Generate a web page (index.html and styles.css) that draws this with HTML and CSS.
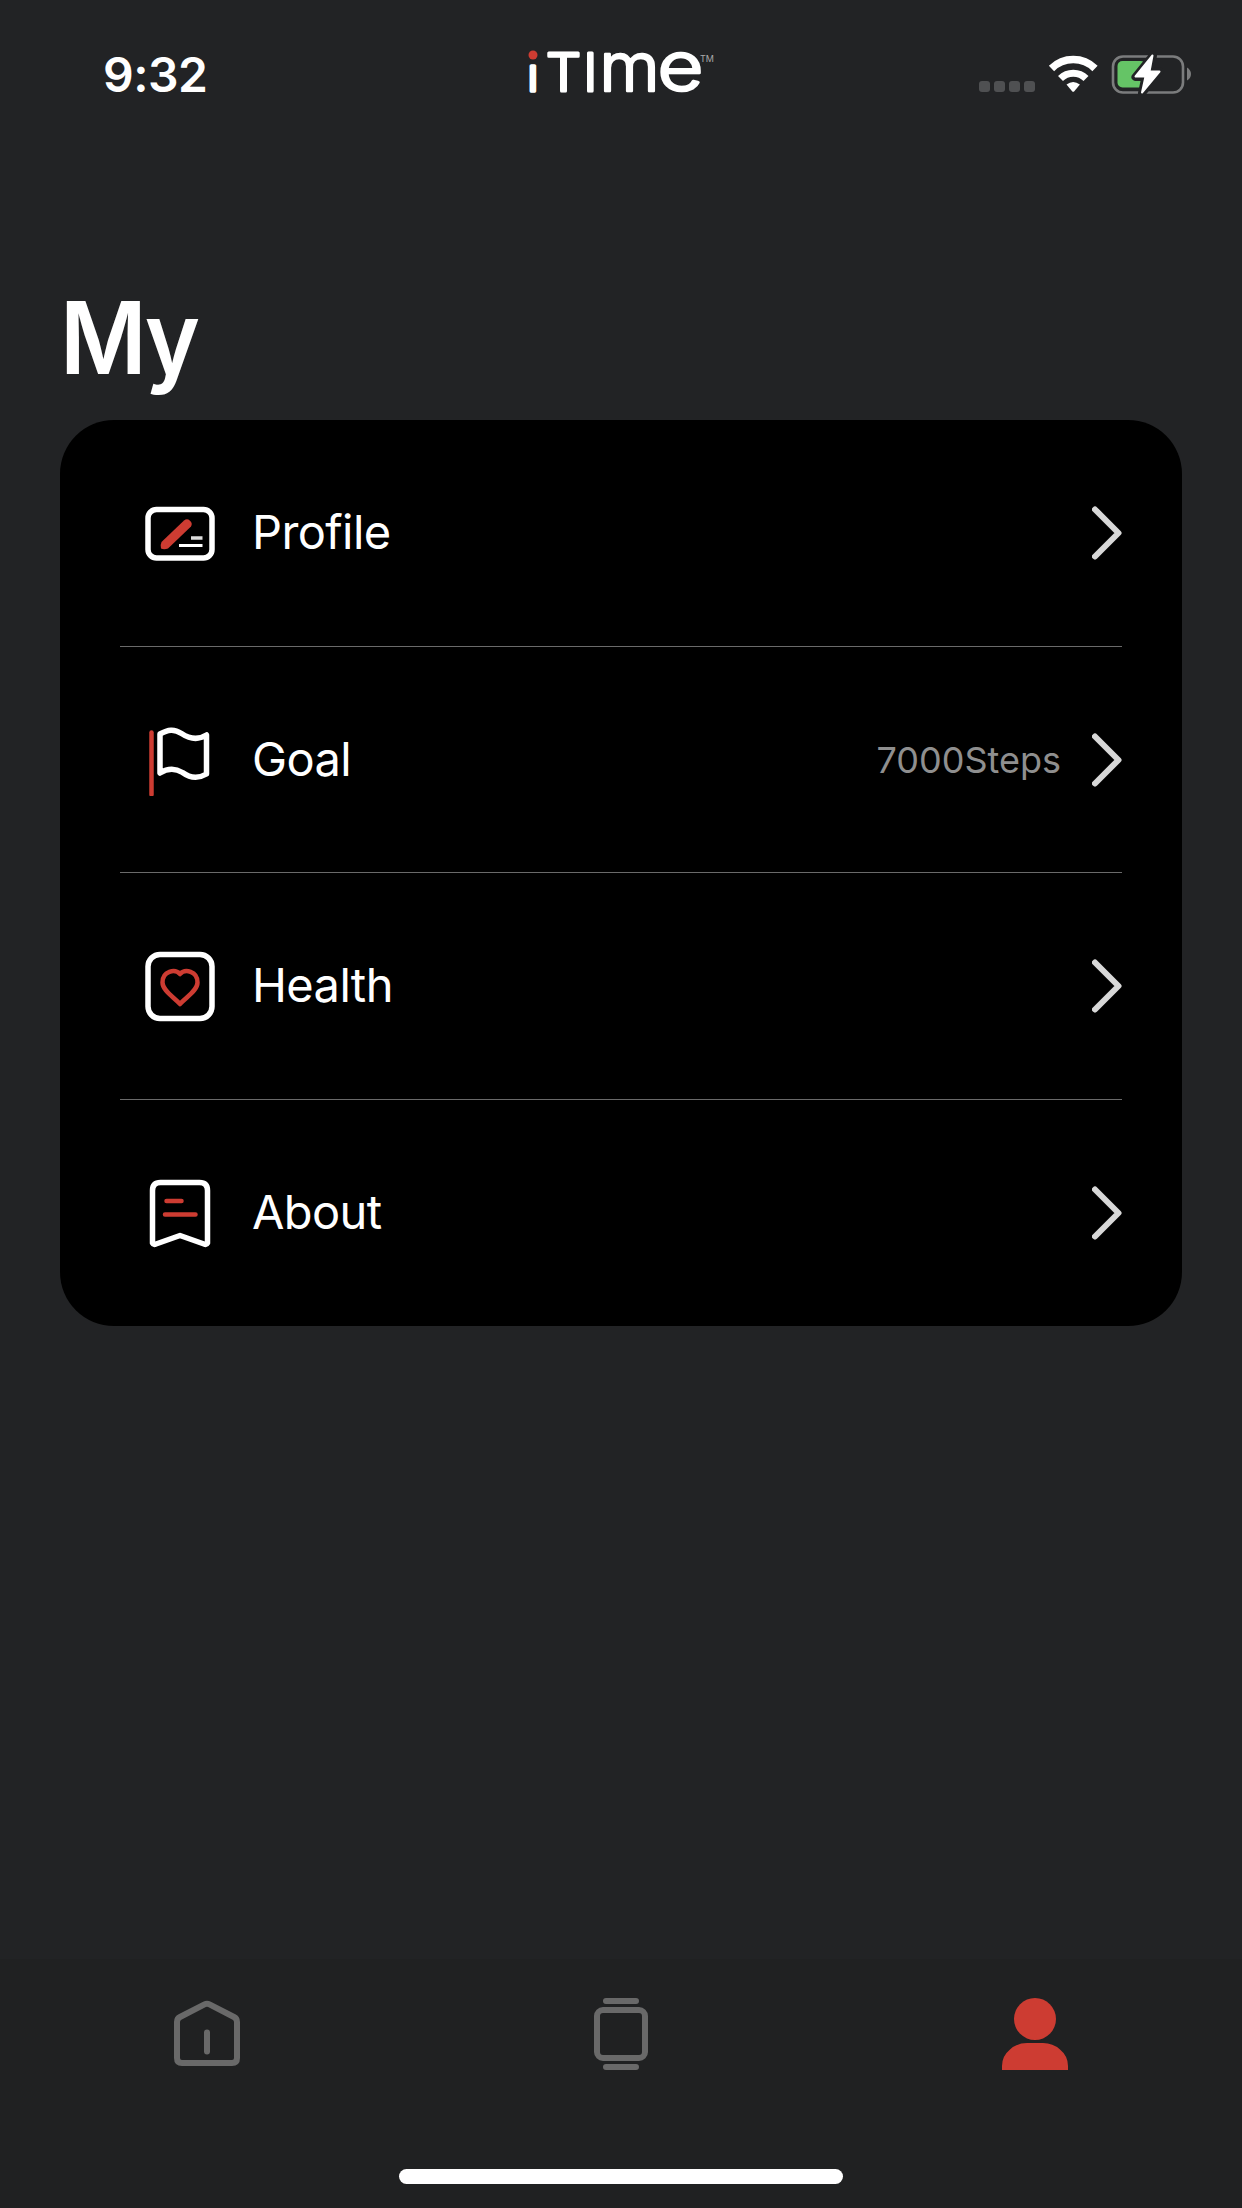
FILE: index.html
```html
<!DOCTYPE html>
<html lang="en">
<head>
    <meta charset="utf-8">
    <title>iTIME</title>
    <link rel="stylesheet" href="styles.css">
</head>
<body>
    <header class="status-bar">
        <div class="time">9:32</div>
        <svg class="logo" width="190" height="120" viewBox="526 0 190 120">
            <g class="logo-text">
                <text x="527.5" y="90.5" class="logo-i">ı</text>
                <text x="546" y="90.5" textLength="35" lengthAdjust="spacingAndGlyphs">T</text>
                <text x="583.5" y="90.5">I</text>
                <text x="599.5" y="90.5" class="logo-tall" textLength="60" lengthAdjust="spacingAndGlyphs">m</text>
                <text x="657.5" y="90" class="logo-tall" textLength="46" lengthAdjust="spacingAndGlyphs">e</text>
            </g>
            <circle cx="533" cy="55" r="4.5" fill="#cd3c32"/>
            <text x="700" y="62" class="logo-tm">TM</text>
        </svg>
        <svg class="status-icons" width="216" height="44" viewBox="978 52 216 44">
            <g fill="#4f5052">
                <rect x="979" y="81" width="11" height="11" rx="3"/>
                <rect x="994" y="81" width="11" height="11" rx="3"/>
                <rect x="1009" y="81" width="11" height="11" rx="3"/>
                <rect x="1024" y="81" width="11" height="11" rx="3"/>
            </g>
            <g fill="none" stroke="#fff">
                <path d="M1051.5 68.5a31 31 0 0 1 43.5 0" stroke-width="7.5"/>
                <path d="M1060.5 78.5a18 18 0 0 1 25.5 0" stroke-width="7"/>
            </g>
            <path d="M1066.5 84.5q6.7-5 13.4 0l-5.6 6.7q-1.100 1-2.200 0z" fill="#fff"/>
            <rect x="1113" y="56.5" width="70" height="36" rx="10" fill="none" stroke="#7b7c7d" stroke-width="2.6"/>
            <path d="M1187 67.5q4 2.500 4 6.500t-4 6.500z" fill="#7b7c7d"/>
            <rect x="1117.5" y="61" width="28" height="26.5" rx="5" fill="#65c466"/>
            <path d="M1153 55.5L1135.5 77H1145.5L1142 93L1160 71.5H1150z" fill="#222325" stroke="#222325" stroke-width="8" stroke-linejoin="round"/>
            <path d="M1152.5 55.5L1135.5 76.5H1145.5L1142 92.5L1159.5 71.5H1149.5z" fill="#fff" stroke="#fff" stroke-width="2" stroke-linejoin="round"/>
        </svg>
    </header>

    <main>
        <h1>My</h1>
        <ul class="menu">
            <li class="menu-item">
                <svg class="icon" width="72" height="72" viewBox="0 0 72 72">
                    <rect x="4" y="12.5" width="64" height="48.5" rx="8.5" class="line"/>
                    <path d="M40 23.500a4.700 4.700 0 0 1 7 6L24 51.500Q20 53 17 51.500Q16 48 17.500 45z" fill="#cd3c32"/>
                    <path d="M47 41h11.5" stroke="#ddd" stroke-width="3.5"/>
                    <path d="M35 48.5h23.5" stroke="#fff" stroke-width="3"/>
                </svg>
                <span class="label">Profile</span>
                <svg class="chevron" width="30" height="54" viewBox="0 0 30 54"><path d="M3 3.5L26.5 27L3 50.5"/></svg>
            </li>
            <li class="menu-item">
                <svg class="icon" width="72" height="72" viewBox="0 0 72 72">
                    <path d="M7.5 8.5v62" class="line red"/>
                    <path d="M16 10C24 5.5 30 4.5 37.5 9.5C45 14.5 53 17 62.5 11V50C54 55 46 54 38.5 48.5C31 44 24 44 16 49z" class="line"/>
                </svg>
                <span class="label">Goal</span>
                <span class="value">7000Steps</span>
                <svg class="chevron" width="30" height="54" viewBox="0 0 30 54"><path d="M3 3.5L26.5 27L3 50.5"/></svg>
            </li>
            <li class="menu-item">
                <svg class="icon" width="72" height="72" viewBox="0 0 72 72">
                    <rect x="4" y="4.5" width="64" height="64" rx="12" class="line"/>
                    <path d="M36 24C31 18.500 18.500 21 18.500 32.500C18.500 40.500 29 46.500 36 54C43 46.500 53.500 40.500 53.500 32.500C53.500 21 41 18.500 36 24z" class="line red"/>
                </svg>
                <span class="label">Health</span>
                <svg class="chevron" width="30" height="54" viewBox="0 0 30 54"><path d="M3 3.5L26.5 27L3 50.5"/></svg>
            </li>
            <li class="menu-item">
                <svg class="icon" width="72" height="72" viewBox="0 0 72 72">
                    <path d="M8.5 66V13.5Q8.5 5.5 16.5 5.5H55.5Q63.5 5.5 63.5 13.5V66Q62.5 68 60 67L36 58.5L12 67Q9.5 68 8.5 66z" class="line"/>
                    <path d="M22.5 24h15M21 37.5h30.5" class="line red"/>
                </svg>
                <span class="label">About</span>
                <svg class="chevron" width="30" height="54" viewBox="0 0 30 54"><path d="M3 3.5L26.5 27L3 50.5"/></svg>
            </li>
        </ul>
    </main>

    <nav class="tab-bar">
        <div class="tabs">
            <a class="tab">
                <svg width="72" height="72" viewBox="0 0 72 72">
                    <path d="M9 19L33.5 6.3Q36 5 38.5 6.3L63 19Q66 20.5 66 24V60Q66 65 61 65H11Q6 65 6 60V24Q6 20.5 9 19zM36 34.5v19"/>
                </svg>
            </a>
            <a class="tab">
                <svg width="72" height="72" viewBox="0 0 72 72">
                    <rect x="12" y="12" width="48" height="48" rx="6"/>
                    <path d="M21 3h30M21 69h30"/>
                </svg>
            </a>
            <a class="tab active">
                <svg width="72" height="72" viewBox="0 0 72 72">
                    <circle cx="36" cy="21" r="21"/>
                    <path d="M3 72V68Q3 58 11 51.5Q18 45 28 45H44Q54 45 61 51.5Q69 58 69 68V72z"/>
                </svg>
            </a>
        </div>
        <div class="home-indicator"></div>
    </nav>
</body>
</html>
```
FILE: styles.css
```css
* {
    box-sizing: border-box;
}
body {
    margin: 0;
    height: 2208px;
    display: flex;
    flex-direction: column;
    background: #222325;
    color: #fff;
    font-family: Inter, "Liberation Sans", sans-serif;
    overflow: hidden;
}
.status-bar {
    display: grid;
    grid-template-columns: 1fr 190px 1fr;
    height: 132px;
    padding: 0 48px 0 103px;
}
.time {
    margin-top: 40px;
    font-size: 48px;
    font-weight: 600;
    line-height: 70px;
    letter-spacing: -0.5px;
}
.logo {
    margin-left: -28px;
    overflow: visible;
}
.logo-text {
    fill: #fff;
    stroke: #fff;
    stroke-width: 3px;
    stroke-linejoin: round;
    font-size: 52px;
    font-weight: 300;
}
.logo-i {
    font-size: 46px;
    stroke-width: 3.5px;
}
.logo-tall {
    font-size: 67px;
    stroke-width: 2.5px;
}
.logo-tm {
    font-size: 9px;
    fill: #aaa;
}
.status-icons {
    justify-self: end;
    margin-top: 52px;
}
main {
    flex: 1;
    padding: 148px 60px 0;
}
h1 {
    margin: 0;
    height: 140px;
    font-size: 100px;
    font-weight: 600;
    line-height: 116px;
    letter-spacing: -3px;
    transform: scaleX(0.94);
    transform-origin: left;
}
.menu {
    list-style: none;
    margin: 0;
    padding: 0 60px;
    height: 906px;
    background: #000;
    border-radius: 54px;
}
.menu-item {
    display: flex;
    align-items: center;
    height: 226.5px;
    padding: 1px 0 0 24px;
}
.menu-item:not(:last-child) {
    border-bottom: 1px solid #6a6a6a;
}
.icon {
    margin-right: 36px;
}
.line {
    fill: none;
    stroke: #fff;
    stroke-width: 5.5px;
    stroke-linecap: round;
    stroke-linejoin: round;
}
.red {
    stroke: #cd3c32;
    stroke-width: 4.5px;
}
.label {
    flex: 1;
    padding-bottom: 3px;
    font-size: 47px;
    letter-spacing: -0.6px;
}
.value {
    margin-right: 31px;
    font-size: 36px;
    color: #8f8f8f;
}
.chevron {
    fill: none;
    stroke: #d8d8d8;
    stroke-width: 6px;
    stroke-linecap: round;
    stroke-linejoin: round;
}
.tab-bar {
    height: 249px;
    background: #202122;
}
.tabs {
    display: flex;
    padding-top: 39px;
    height: 210px;
}
.tab {
    flex: 1;
    text-align: center;
    fill: none;
    stroke: #696969;
    stroke-width: 6px;
    stroke-linecap: round;
    stroke-linejoin: round;
}
.active {
    fill: #cd3c32;
    stroke: none;
}
.home-indicator {
    width: 444px;
    height: 15px;
    margin: 0 auto;
    background: #fff;
    border-radius: 8px;
}
```
